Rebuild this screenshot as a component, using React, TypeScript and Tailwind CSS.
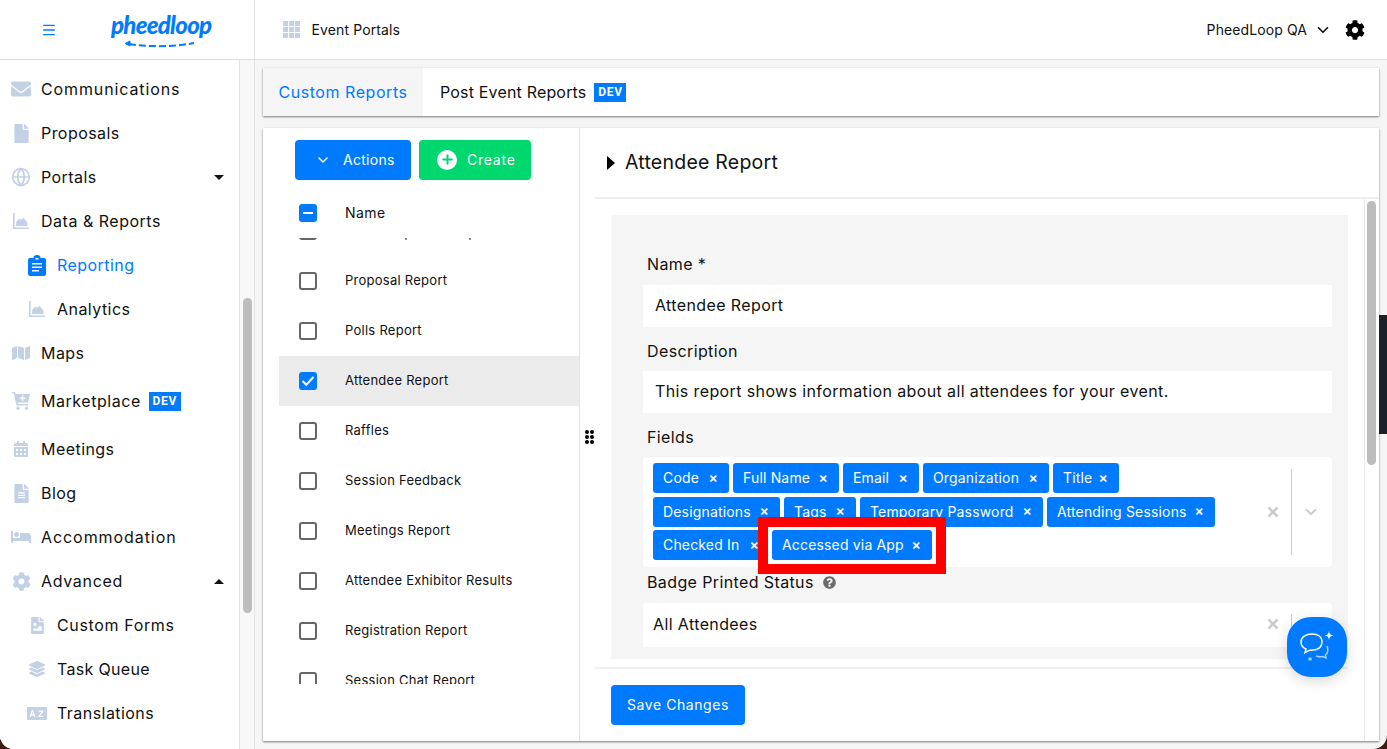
import React from "react";
import { FaEnvelope, FaFile, FaMap, FaCalendarAlt, FaFileAlt, FaBed, FaCog, FaLayerGroup, FaFileImage, FaQuestionCircle } from "react-icons/fa";
import { Globe, ChevronDown, Menu, Plus } from "lucide-react";

const C = "#c3d1e6";

function AreaIcon({ size = 16 }: { size?: number }) {
  return (
    <svg width={size} height={size} viewBox="0 0 16 16" fill={C}>
      <path d="M0 0h1.600v14.400H16V16H0z" />
      <path d="M3 13v-3.500L6 5.500l2 1.500 2-2 1.500 1 3 3.500V13z" />
    </svg>
  );
}

function ReportIcon() {
  return (
    <svg width="18" height="21" viewBox="0 0 18 21" fill="#007bff">
      <path fillRule="evenodd" d="M2 3h3.500V2.500a3.500 2.500 0 0 1 7 0V3H16a2 2 0 0 1 2 2v14a2 2 0 0 1-2 2H2a2 2 0 0 1-2-2V5a2 2 0 0 1 2-2zm2 5v1.600h10V8zm0 3.500v1.600h10v-1.600zm0 3.500v1.600h7V15zM7.500 3v1.500h3V3z" />
    </svg>
  );
}

function CartIcon() {
  return (
    <svg width="18" height="18" viewBox="0 0 18 18" fill={C}>
      <path fillRule="evenodd" d="M0 0h3l.6 2H18l-2 8.500H5.500l.4 1.500H16v1.500H4.500L1.800 1.500H0zM9.800 3.500v2H7.800V7h2v2h1.500V7h2V5.500h-2v-2z" />
      <circle cx="6" cy="16.200" r="1.600" />
      <circle cx="14.500" cy="16.200" r="1.600" />
    </svg>
  );
}

function TransIcon() {
  return (
    <svg width="20" height="13" viewBox="0 0 20 13" fill={C}>
      <path fillRule="evenodd" d="M1 0h18a1 1 0 0 1 1 1v11a1 1 0 0 1-1 1H1a1 1 0 0 1-1-1V1a1 1 0 0 1 1-1zm4 3L2.500 10h1.400l.5-1.500h2.200l.5 1.500h1.400L6 3zm.5 1.800.8 2.500H4.700zM11.500 3.500v1.200h3.300l-3.500 4.300v1h5v-1.200h-3.300l3.500-4.300v-1z" />
    </svg>
  );
}

function Dev() {
  return (
    <span className="flex h-[19px] w-[32px] items-center justify-center bg-[#007bff] font-['Roboto',sans-serif] text-[12px] font-bold tracking-[0.06em] text-white">
      DEV
    </span>
  );
}

function NavRow({ icon, label, sub, active, h, right, track }: { icon: React.ReactNode; label: string; sub?: boolean; active?: boolean; h?: string; right?: React.ReactNode; track?: string }) {
  return (
    <div className={`flex items-center ${h ?? "h-[44px]"} ${sub ? "pl-[27px]" : "pl-[11px]"}`}>
      <span className="flex w-[20px] items-center justify-center">{icon}</span>
      <span className={`ml-[10px] text-[16px] ${track ?? "tracking-[0.028em]"} ${active ? "text-[#007bff]" : "text-[#111]"}`}>{label}</span>
      {right}
    </div>
  );
}

const Caret = ({ up }: { up?: boolean }) => (
  <span className={`ml-auto mr-[15px] h-0 w-0 border-x-[5px] border-x-transparent ${up ? "border-b-[5px] border-b-[#111]" : "border-t-[5px] border-t-[#111]"}`} />
);

function Sidebar() {
  return (
    <nav className="h-full w-[240px] overflow-hidden border-r border-[#e4e4e4] bg-white pt-[7px]">
      <NavRow icon={<FaEnvelope size={20} color={C} />} label="Communications" track="tracking-[0.055em]" />
      <NavRow icon={<FaFile size={19} color={C} />} label="Proposals" />
      <NavRow icon={<Globe size={20} color={C} strokeWidth={2} />} label="Portals" right={<Caret />} />
      <NavRow icon={<AreaIcon />} label="Data & Reports" track="tracking-[0.032em]" />
      <NavRow sub active icon={<ReportIcon />} label="Reporting" />
      <NavRow sub icon={<AreaIcon />} label="Analytics" />
      <NavRow icon={<FaMap size={18} color={C} />} label="Maps" />
      <NavRow
        h="h-[52px]"
        icon={<CartIcon />}
        label="Marketplace"
        track="tracking-[0.034em]"
        right={<span className="ml-[8px]"><Dev /></span>}
      />
      <NavRow icon={<FaCalendarAlt size={16} color={C} />} label="Meetings" />
      <NavRow icon={<FaFileAlt size={19} color={C} />} label="Blog" />
      <NavRow icon={<FaBed size={22} color={C} />} label="Accommodation" track="tracking-[0.058em]" />
      <NavRow icon={<FaCog size={19} color={C} />} label="Advanced" track="tracking-[0.042em]" right={<Caret up />} />
      <NavRow sub icon={<FaFileImage size={17} color={C} />} label="Custom Forms" track="tracking-[0.04em]" />
      <NavRow sub icon={<FaLayerGroup size={16} color={C} />} label="Task Queue" track="tracking-[0.02em]" />
      <NavRow sub icon={<TransIcon />} label="Translations" />
    </nav>
  );
}

function Header() {
  return (
    <header className="flex h-[60px] shrink-0 border-b border-[#dddddd] bg-white">
      <div className="flex w-[255px] items-center border-r border-[#e4e4e4] pl-[41px]">
        <Menu size={16} color="#007bff" strokeWidth={2} />
        <div className="relative ml-[54px] h-[48px] w-[100px]">
          <span className="block text-center font-['Lato',sans-serif] text-[24px] font-black italic leading-[38px] tracking-[-0.03em] text-[#007bff]">pheedloop</span>
          <svg className="absolute left-[13px] top-[34px]" width="72" height="9" viewBox="0 0 72 9" fill="none" stroke="#007bff" strokeWidth="2">
            <path d="M5 4c20 3 45 3 65-1" strokeDasharray="7 3" />
            <path d="M6 1 1 3.500 6 6z" fill="#007bff" strokeWidth="1" />
          </svg>
        </div>
      </div>
      <div className="flex flex-1 items-center pl-[28px] pr-[22px]">
        <div className="grid grid-cols-3 gap-[1.500px]">
          {Array.from({ length: 9 }).map((_, i) => (
            <span key={i} className="h-[4.500px] w-[4.500px] bg-[#c3d1e6]" />
          ))}
        </div>
        <span className="ml-[12px] text-[14px] tracking-[0.009em] text-[#111]">Event Portals</span>
        <span className="ml-auto text-[14px] tracking-[0.007em] text-[#111]">PheedLoop QA</span>
        <ChevronDown size={18} color="#111" strokeWidth={2.200} className="ml-[7px]" />
        <FaCog size={20} color="#000" className="ml-[13px]" />
      </div>
    </header>
  );
}

function Check({ state }: { state?: "minus" | "on" }) {
  if (state === "minus")
    return (
      <span className="flex h-[18px] w-[18px] items-center justify-center rounded-[3px] bg-[#007bff]">
        <span className="h-[2px] w-[10px] bg-white" />
      </span>
    );
  if (state === "on")
    return (
      <span className="flex h-[18px] w-[18px] items-center justify-center rounded-[3px] bg-[#007bff]">
        <svg width="14" height="12" viewBox="0 0 14 12" fill="none" stroke="#fff" strokeWidth="2"><path d="m1.500 6 3.800 3.800L12.500 2" /></svg>
      </span>
    );
  return <span className="h-[18px] w-[18px] rounded-[3px] border-2 border-[#666]" />;
}

const reports = ["Proposal Report", "Polls Report", "Attendee Report", "Raffles", "Session Feedback", "Meetings Report", "Attendee Exhibitor Results", "Registration Report", "Session Chat Report"];

function ListPanel() {
  return (
    <div className="relative flex w-[317px] shrink-0 flex-col border-r border-[#e4e4e4]">
      <div className="flex gap-[8px] pl-[32px] pt-[12px]">
        <button className="flex h-[40px] w-[116px] items-center rounded-[4px] bg-[#007bff] pb-[1px] pl-[20px] text-[14px] tracking-[0.02em] text-white">
          <ChevronDown size={16} strokeWidth={2.200} />
          <span className="ml-[12px]">Actions</span>
        </button>
        <button className="flex h-[40px] w-[112px] items-center rounded-[4px] bg-[#00d76f] pb-[1px] pl-[18px] text-[14px] tracking-[0.055em] text-white">
          <span className="flex h-[20px] w-[20px] items-center justify-center rounded-full bg-white">
            <Plus size={15} color="#00d76f" strokeWidth={3} />
          </span>
          <span className="ml-[10px]">Create</span>
        </button>
      </div>
      <div className="mt-[24px] flex h-[18px] items-center pl-[36px]">
        <Check state="minus" />
        <span className="ml-[28px] pb-[2px] text-[14px] tracking-[0.03em] text-[#111]">Name</span>
      </div>
      <div className="relative ml-[16px] mt-[16px] h-[446px] overflow-hidden">
        <div className="-mt-[32px]">
          <div className="flex h-[50px] items-center pl-[20px]">
            <Check />
          </div>
          {reports.map((r) => (
            <div key={r} className={`flex h-[50px] items-center pl-[20px] ${r === "Attendee Report" ? "bg-[#ebebeb]" : ""}`}>
              <Check state={r === "Attendee Report" ? "on" : undefined} />
              <span className="ml-[28px] text-[13px] tracking-[0.02em] text-[#111]">{r}</span>
            </div>
          ))}
        </div>
        <span className="absolute left-[126px] top-0 h-[2px] w-[1.500px] bg-[#888]" />
        <span className="absolute left-[190px] top-0 h-[2px] w-[1.500px] bg-[#888]" />
      </div>
      <div className="absolute -right-[15px] top-[301px] grid grid-cols-2 gap-[1px] bg-white py-[1px]">
        {Array.from({ length: 6 }).map((_, i) => (
          <span key={i} className="h-[4px] w-[4px] rounded-full bg-black" />
        ))}
      </div>
    </div>
  );
}

const rows = [
  [["Code", "w-[76px]"], ["Full Name", "w-[106px]"], ["Email", "w-[76px]"], ["Organization", "w-[126px]"], ["Title", "w-[66px]"]],
  [["Designations", "w-[127px]"], ["Tags", "w-[72px]"], ["Temporary Password", "w-[183px]"], ["Attending Sessions", "w-[168px]"]],
];

function Tag({ label, w, z }: { label: string; w: string; z?: boolean }) {
  return (
    <span className={`flex h-[30px] ${w} ${z ? "relative z-10" : ""} items-center justify-between rounded-[3px] bg-[#007bff] pb-[1px] pl-[10px] pr-[11px] text-[14px] tracking-[0.012em] text-white`}>
      <span className="whitespace-nowrap">{label}</span>
      <span className="text-[14px] font-semibold leading-none">×</span>
    </span>
  );
}

const formText = "text-[16px] tracking-[0.024em] text-[#111] pb-[2px]";

function Field({ label, children }: { label: React.ReactNode; children: React.ReactNode }) {
  return (
    <div>
      <div className={`flex h-[24px] items-center pl-[4px] ${formText}`}>{label}</div>
      {children}
    </div>
  );
}

function FormPanel() {
  return (
    <div className="flex min-w-0 flex-1 flex-col">
      <div className="ml-[15px] flex h-[71px] shrink-0 items-center border-b-2 border-[#eeeeee] pl-[12px]">
        <span className="h-0 w-0 border-y-[7px] border-l-[8px] border-y-transparent border-l-black" />
        <span className="ml-[10px] text-[19.500px] tracking-[0.012em] text-[#111]">Attendee Report</span>
      </div>
      <div className="flex min-h-0 flex-1">
        <div className="flex min-w-0 flex-1 flex-col pl-[15px]">
          <div className="mr-[16px] h-[470px] shrink-0 border-b-2 border-[#f0f0f0] pt-[16px]">
            <div className="ml-[16px] h-[444px] overflow-hidden bg-[#f5f5f5] pl-[32px] pr-[16px] pt-[38px]">
              <Field label="Name *">
                <div className={`mt-[8px] flex h-[42px] items-center bg-white pl-[12px] ${formText}`}>Attendee Report</div>
              </Field>
              <div className="mt-[13px]" />
              <Field label="Description">
                <div className={`mt-[7px] flex h-[42px] items-center bg-white pl-[12px] ${formText}`}>This report shows information about all attendees for your event.</div>
              </Field>
              <div className="mt-[13px]" />
              <Field label="Fields">
                <div className="relative mt-[7px] h-[110px] rounded-[4px] bg-white pl-[10px] pt-[6px]">
                  <div className="flex flex-col gap-[3.600px]">
                    {rows.map((r, i) => (
                      <div key={i} className="flex gap-[4px]">
                        {r.map(([l, w]) => (
                          <Tag key={l} label={l} w={w} />
                        ))}
                      </div>
                    ))}
                    <div className="flex gap-[2px]">
                      <Tag label="Checked In" w="w-[117px]" />
                      <Tag label="Accessed via App" w="w-[160px]" z />
                    </div>
                  </div>
                  <div className="absolute left-[115px] top-[60px] h-[57px] w-[188px] border-[10px] border-[#ff0000] bg-white" />
                  <div className="absolute right-[0px] top-[12px] flex h-[86px] items-center">
                    <ClearX />
                    <span className="ml-[12px] h-full w-px bg-[#cccccc]" />
                    <ChevronDown size={18} color="#cccccc" strokeWidth={2.500} className="ml-[10px] mr-[12px]" />
                  </div>
                </div>
              </Field>
              <div className="mt-[4px]" />
              <Field label={<>Badge Printed Status<FaQuestionCircle size={13} color="#6b6b6b" className="ml-[9px]" /></>}>
                <div className={`relative mt-[8px] flex h-[44px] items-center rounded-t-[4px] bg-white pl-[10px] ${formText}`}>
                  All Attendees
                  <div className="absolute right-[40px] top-[11px] flex h-[33px] items-start">
                    <span className="mt-[4px]"><ClearX /></span>
                    <span className="ml-[12px] h-full w-px bg-[#cccccc]" />
                  </div>
                </div>
              </Field>
            </div>
          </div>
          <div className="pl-[16px] pt-[16px]">
            <button className="h-[40px] w-[134px] rounded-[4px] bg-[#007bff] pb-[1px] text-[14px] tracking-[0.04em] text-white">Save Changes</button>
          </div>
        </div>
        <div className="flex w-[15px] shrink-0 justify-center border-l border-[#e8e8e8] bg-white pt-[2px]">
          <span className="mr-[1px] h-[264px] w-[9px] rounded-full bg-[#bdbdbd]" />
        </div>
      </div>
    </div>
  );
}

function ClearX() {
  return (
    <svg width="12" height="12" viewBox="0 0 12 12" stroke="#cccccc" strokeWidth="2.500"><path d="M1.500 1.500l9 9M10.500 1.500l-9 9" /></svg>
  );
}

function ChatFab() {
  return (
    <div className="absolute left-[1287px] top-[617px] z-20 flex h-[60px] w-[60px] items-center justify-center rounded-[24px] bg-[#007bff] shadow-[0_4px_14px_rgba(0,0,0,0.15)]">
      <svg width="36" height="32" viewBox="0 0 36 32" fill="none" stroke="#fff" strokeWidth="1.500">
        <path d="M13 3c6 0 10 3 10 8s-4 8-9 8c-2 0-3.500 0-5 1l-3 1.500 1-3.500C3.500 16.500 2 14 2 11c0-5 5-8 11-8z" />
        <path d="M28 15c1.500 3 1 7-1.500 9l.5 3-3-1.500c-2 .5-4 .5-7-.5" stroke="#a9d0ff" />
        <path d="M30 0c.4 3 1.500 4 4.500 4.500C31.500 5 30.400 6 30 9c-.4-3-1.500-4-4.500-4.500C28.500 4 29.600 3 30 0z" fill="#fff" stroke="none" />
        <circle cx="11" cy="28" r="1.800" fill="#a9d0ff" stroke="none" />
      </svg>
    </div>
  );
}

export default function App() {
  return (
    <div className="relative h-[749px] w-[1387px] overflow-hidden bg-[#3f1c12] font-['Inter',sans-serif]">
      <div className="flex h-full flex-col overflow-hidden rounded-b-[14px] bg-[#f5f5f5]">
        <Header />
        <div className="flex min-h-0 flex-1">
          <div className="flex w-[255px] shrink-0 border-r border-[#e4e4e4] bg-[#f8f8f8]">
            <Sidebar />
            <div className="w-[14px] shrink-0 pl-[3px] pt-[238px]">
              <span className="block h-[315px] w-[9px] rounded-full bg-[#bdbdbd]" />
            </div>
          </div>
          <main className="flex min-w-0 flex-1 flex-col pl-[8px] pr-[8px] pt-[8px]">
            <div className="flex h-[48px] shrink-0 bg-white shadow-[0_1px_2px_rgba(0,0,0,0.5)]">
              <div className="flex w-[160px] items-center justify-center bg-[#f5f5f5] text-[16px] tracking-[0.035em] text-[#007bff]">Custom Reports</div>
              <div className="flex items-center pl-[17px] text-[16px] tracking-[0.011em] text-[#111]">
                Post Event Reports
                <span className="ml-[8px]"><Dev /></span>
              </div>
            </div>
            <div className="mt-[12px] flex h-[613px] shrink-0 bg-white shadow-[0_1px_2px_rgba(0,0,0,0.5)]">
              <ListPanel />
              <FormPanel />
            </div>
          </main>
        </div>
      </div>
      <div className="absolute left-[1379px] top-[315px] h-[119px] w-[8px] bg-[#1c1f24]" />
      <ChatFab />
    </div>
  );
}
